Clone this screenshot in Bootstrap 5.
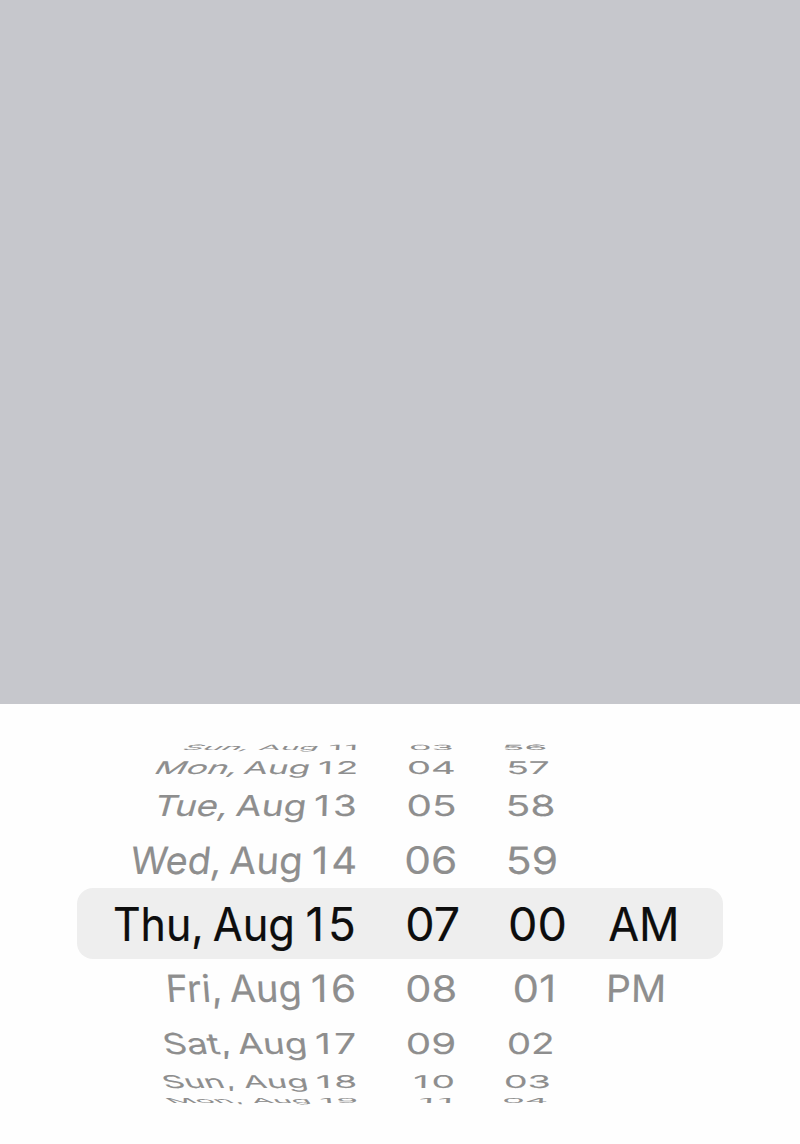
<!DOCTYPE html>
<html lang="en">
<head>
<meta charset="utf-8">
<meta name="viewport" content="width=device-width, initial-scale=1">
<title>Date and time picker</title>
<link href="https://cdn.jsdelivr.net/npm/bootstrap@5.3.0/dist/css/bootstrap.min.css" rel="stylesheet">
<style>
  body { font-family: Inter, sans-serif; background: #fefefe; }
  .backdrop { height: 704px; background: #c6c7cc; }
  .sheet { height: 440px; background: #fefefe; padding: 32px 77px 0; }
  .wheel-row { display: grid; grid-template-columns: 303px 114px 99px 130px; color: #8e8e8e; }
  .wheel-row.selected { color: #0d0d0d; background: #eeeeee; border-radius: 16px; }
  .wheel-cell { display: grid; height: 0; }
  .wheel-cell span { grid-area: 1 / 1; width: max-content; font-size: 46.7px; line-height: 48px; white-space: pre; transform-origin: 0 0; -webkit-text-stroke: .2px currentColor; }
</style>
</head>
<body>
<main class="d-flex flex-column vh-100 overflow-hidden">
  <div class="backdrop flex-shrink-0"></div>
  <section class="sheet flex-shrink-0" id="picker" aria-label="Date and time"></section>
</main>
<script src="https://cdn.jsdelivr.net/npm/bootstrap@5.3.0/dist/js/bootstrap.bundle.min.js"></script>
<script>
  // Each row of the drum: height, cap line, baseline, lean, and per column its [word, left, right] parts.
  const rows = [
    { h: 18.5, t: 744.5, b: 749.7, k: .06, c: [[['Sun,',181.7,245.2],['Aug',258.3,315.2],['11',330,355.3]],[['03',410.7,451.7]],[['56',504.3,545.3]]] },
    { h: 27, t: 760.5, b: 773.3, k: .05, c: [[['Mon,',155,233.3],['Aug',243,306.5],['12',319.5,355.7]],[['04',408.7,453.7]],[['57',508.7,548.7]]] },
    { h: 48, t: 794.6, b: 815.6, k: .036, c: [[['Tue,',153.8,223.9],['Aug',235.3,302.8],['13',315.5,354.5]],[['05',408.3,454.7]],[['58',508.3,553.3]]] },
    { h: 58.5, t: 846, b: 873.3, k: .017, c: [[['Wed,',129.8,218],['Aug',229.7,299.6],['14',313.5,355]],[['06',406.3,455]],[['59',508.3,555.7]]] },
    { h: 71, t: 907.5, b: 941.2, k: 0, sel: true, c: [[['Thu,',114.9,200.7],['Aug',213.4,292.1],['15',307.6,353.7]],[['07',407.4,458.4]],[['00',510.3,564.5]],[['AM',608.9,676.2]]] },
    { h: 60.5, t: 974.8, b: 1002, k: -.014, c: [[['Fri,',169.9,220.2],['Aug',230.9,299.7],['16',312.9,354]],[['08',407.3,455]],[['01',514.5,552.7]],[['PM',608.9,663.1]]] },
    { h: 45, t: 1032.4, b: 1053.4, k: -.03, c: [[['Sat,',167,229.5],['Aug',239.2,305.7],['17',317.1,355]],[['09',407.6,453.8]],[['02',508.6,552]]] },
    { h: 29, t: 1074.7, b: 1087.5, k: -.04, c: [[['Sun,',167,234],['Aug',245.3,307],['18',318,355.3]],[['10',414.9,452.8]],[['03',505.6,548.8]]] },
    { h: 14, t: 1098, b: 1102.9, k: -.06, c: [[['Mon,',174,242.5],['Aug',254,310.2],['19',321.3,356.5]],[['11',420.3,450]],[['04',503.7,546.3]]] }
  ];
  const vanish = [350, 430, 520, 605];
  const size = 46.7, line = 48, cap = size * .727;
  const ctx = document.createElement('canvas').getContext('2d');
  ctx.font = '467px Inter';
  const picker = document.getElementById('picker');

  for (const r of rows) {
    const row = document.createElement('div');
    row.className = 'wheel-row' + (r.sel ? ' selected' : '');
    row.style.height = r.h + 'px';
    picker.append(row);
    r.c.forEach((words, i) => {
      const cell = document.createElement('div');
      cell.className = 'wheel-cell';
      row.append(cell);
      const box = cell.getBoundingClientRect();
      const sy = (r.b - r.t) / cap;
      for (const [label, left, right] of words) {
        const span = document.createElement('span');
        span.textContent = label;
        cell.append(span);
        // A leading 1 keeps nearly the advance of the other figures.
        const gap = label[0] === '1' ? 4 : 0;
        if (gap) span.style.letterSpacing = gap + 'px';
        const m = ctx.measureText(label);
        const ink0 = -m.actualBoundingBoxLeft / 10, ink1 = m.actualBoundingBoxRight / 10 + gap;
        const asc = m.fontBoundingBoxAscent / 10, desc = m.fontBoundingBoxDescent / 10;
        const base = (line - asc - desc) / 2 + asc;
        const sx = (right - left) / (ink1 - ink0);
        // Words lean towards their column's vanishing line as the drum curves away.
        const lean = -r.k * (vanish[i] - (left + right) / 2) / cap;
        span.style.transform = `matrix(${sx},0,${lean},${sy},${left - box.left - ink0 * sx - lean * base},${r.b - box.top - base * sy})`;
      }
    });
  }
</script>
</body>
</html>
